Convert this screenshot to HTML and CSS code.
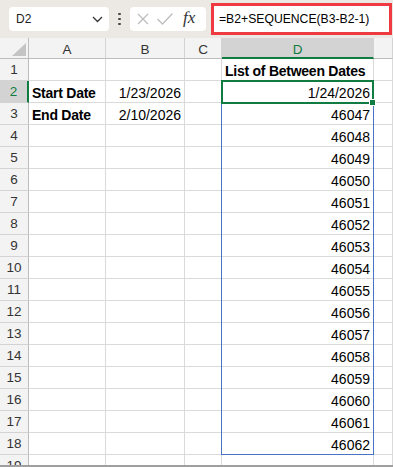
FILE: index.html
```html
<!DOCTYPE html>
<html>
<head>
<meta charset="utf-8">
<link rel="stylesheet" href="styles.css">
</head>
<body>
<div class="toolbar">
  <div class="namebox">
    <span class="name">D2</span>
    <svg class="chev" width="11" height="7" viewBox="0 0 11 7"><polyline points="1,1 5.5,5.5 10,1" fill="none" stroke="#333" stroke-width="1.3"/></svg>
  </div>
  <div class="dots"><i></i><i></i><i></i></div>
  <div class="fxbox">
    <svg class="ico" width="14" height="14" viewBox="0 0 14 14"><path d="M2 2 L12 12 M12 2 L2 12" stroke="#bdbdbd" stroke-width="1.3" fill="none"/></svg>
    <svg class="ico" width="18" height="14" viewBox="0 0 18 14"><polyline points="1.5,7 6.5,12 16.5,1.5" stroke="#bdbdbd" stroke-width="1.3" fill="none"/></svg>
    <span class="fx">fx</span>
  </div>
  <div class="formula">=B2+SEQUENCE(B3-B2-1)</div>
</div>
<div class="sheet">
  <div class="grid">
    <div class="corner"><svg width="29" height="21" viewBox="0 0 29 21"><polygon points="12,18 26,18 26,5" fill="#c4c4c4"/></svg></div>
    <div class="ch">A</div><div class="ch">B</div><div class="ch">C</div><div class="ch act">D</div><div class="ch"></div>

    <div class="rh">1</div><div class="c"></div><div class="c"></div><div class="c"></div><div class="c b">List of Between Dates</div><div class="c"></div>
    <div class="rh act">2</div><div class="c b">Start Date</div><div class="c r">1/23/2026</div><div class="c"></div><div class="c r">1/24/2026</div><div class="c"></div>
    <div class="rh">3</div><div class="c b">End Date</div><div class="c r">2/10/2026</div><div class="c"></div><div class="c r">46047</div><div class="c"></div>
    <div class="rh">4</div><div class="c"></div><div class="c"></div><div class="c"></div><div class="c r">46048</div><div class="c"></div>
    <div class="rh">5</div><div class="c"></div><div class="c"></div><div class="c"></div><div class="c r">46049</div><div class="c"></div>
    <div class="rh">6</div><div class="c"></div><div class="c"></div><div class="c"></div><div class="c r">46050</div><div class="c"></div>
    <div class="rh">7</div><div class="c"></div><div class="c"></div><div class="c"></div><div class="c r">46051</div><div class="c"></div>
    <div class="rh">8</div><div class="c"></div><div class="c"></div><div class="c"></div><div class="c r">46052</div><div class="c"></div>
    <div class="rh">9</div><div class="c"></div><div class="c"></div><div class="c"></div><div class="c r">46053</div><div class="c"></div>
    <div class="rh">10</div><div class="c"></div><div class="c"></div><div class="c"></div><div class="c r">46054</div><div class="c"></div>
    <div class="rh">11</div><div class="c"></div><div class="c"></div><div class="c"></div><div class="c r">46055</div><div class="c"></div>
    <div class="rh">12</div><div class="c"></div><div class="c"></div><div class="c"></div><div class="c r">46056</div><div class="c"></div>
    <div class="rh">13</div><div class="c"></div><div class="c"></div><div class="c"></div><div class="c r">46057</div><div class="c"></div>
    <div class="rh">14</div><div class="c"></div><div class="c"></div><div class="c"></div><div class="c r">46058</div><div class="c"></div>
    <div class="rh">15</div><div class="c"></div><div class="c"></div><div class="c"></div><div class="c r">46059</div><div class="c"></div>
    <div class="rh">16</div><div class="c"></div><div class="c"></div><div class="c"></div><div class="c r">46060</div><div class="c"></div>
    <div class="rh">17</div><div class="c"></div><div class="c"></div><div class="c"></div><div class="c r">46061</div><div class="c"></div>
    <div class="rh">18</div><div class="c"></div><div class="c"></div><div class="c"></div><div class="c r">46062</div><div class="c"></div>
    <div class="rh">19</div><div class="c"></div><div class="c"></div><div class="c"></div><div class="c"></div><div class="c"></div>
  </div>
  <div class="spill"></div>
  <div class="selection"></div>
  <div class="handle"></div>
</div>
</body>
</html>
```
FILE: styles.css
```css
html, body {
  margin: 0;
  padding: 0;
}
body {
  width: 393px;
  height: 467px;
  overflow: hidden;
  background: #ffffff;
  font-family: "Liberation Sans", Arial, sans-serif;
  color: #000;
}
.toolbar {
  height: 38px;
  background: #ece9e4;
  display: flex;
  align-items: center;
  padding-left: 9px;
  box-sizing: border-box;
}
.namebox {
  width: 100px;
  height: 24px;
  background: #fff;
  border-radius: 4px;
  box-sizing: border-box;
  display: flex;
  align-items: center;
  justify-content: space-between;
  padding: 0 6px 0 7px;
}
.name {
  font-size: 12px;
  color: #222;
}
.chev {
  display: block;
}
.dots {
  width: 21px;
  display: flex;
  flex-direction: column;
  align-items: center;
  gap: 2.5px;
}
.dots i {
  display: block;
  width: 2.5px;
  height: 2.5px;
  border-radius: 50%;
  background: #444;
}
.fxbox {
  width: 76px;
  height: 24px;
  background: #fff;
  border-radius: 4px;
  display: flex;
  align-items: center;
  padding-left: 6px;
  box-sizing: border-box;
  gap: 6px;
}
.ico {
  display: block;
}
.fx {
  font-family: "Liberation Serif", "DejaVu Serif", serif;
  font-style: italic;
  font-size: 17px;
  color: #333;
  margin-left: 3px;
  margin-top: -2px;
}
.formula {
  margin-left: 5px;
  width: 181px;
  height: 32px;
  border: 3px solid #ee3b42;
  box-sizing: border-box;
  background: #fff;
  font-size: 12.2px;
  line-height: 26px;
  padding-left: 5px;
  white-space: nowrap;
}
.sheet {
  position: relative;
  height: 427px;
  overflow: hidden;
  border-bottom: 2px solid #9f9f9f;
}
.grid {
  display: grid;
  grid-template-columns: 29px 77px 79px 37px 152px 19px;
  grid-template-rows: 21px;
  grid-auto-rows: 22px;
}
.grid > div {
  box-sizing: border-box;
  white-space: nowrap;
}
.corner {
  background: #f3f3f3;
  border-right: 1px solid #bdbdbd;
  border-bottom: 1px solid #bdbdbd;
}
.corner svg {
  display: block;
}
.ch {
  background: #f3f3f3;
  border-right: 1px solid #d3d3d3;
  border-bottom: 1px solid #bdbdbd;
  text-align: center;
  font-size: 13.5px;
  line-height: 19px;
  padding-top: 2px;
  color: #333;
}
.ch.act {
  background: #d3d3d3;
  color: #107c41;
  border-bottom: 2px solid #107c41;
}
.rh {
  background: #f3f3f3;
  border-right: 1px solid #bdbdbd;
  border-bottom: 1px solid #d3d3d3;
  text-align: center;
  font-size: 13.5px;
  line-height: 20px;
  padding-top: 1px;
  color: #333;
}
.rh.act {
  background: #d3d3d3;
  color: #107c41;
  border-right: 2px solid #107c41;
}
.c {
  border-right: 1px solid #dadada;
  border-bottom: 1px solid #dadada;
  font-size: 14px;
  line-height: 20px;
  padding: 2px 3px 0 3px;
}
.b {
  font-weight: bold;
  letter-spacing: -0.25px;
}
.r {
  text-align: right;
}
.spill {
  position: absolute;
  left: 221px;
  top: 42px;
  width: 153px;
  height: 375px;
  border: 1px solid #4a72c9;
  box-sizing: border-box;
}
.selection {
  position: absolute;
  left: 221px;
  top: 42px;
  width: 153px;
  height: 24px;
  border: 2px solid #107c41;
  box-sizing: border-box;
}
.handle {
  position: absolute;
  left: 369px;
  top: 61px;
  width: 7px;
  height: 7px;
  background: #107c41;
  border: 1px solid #fff;
  box-sizing: border-box;
}
```
